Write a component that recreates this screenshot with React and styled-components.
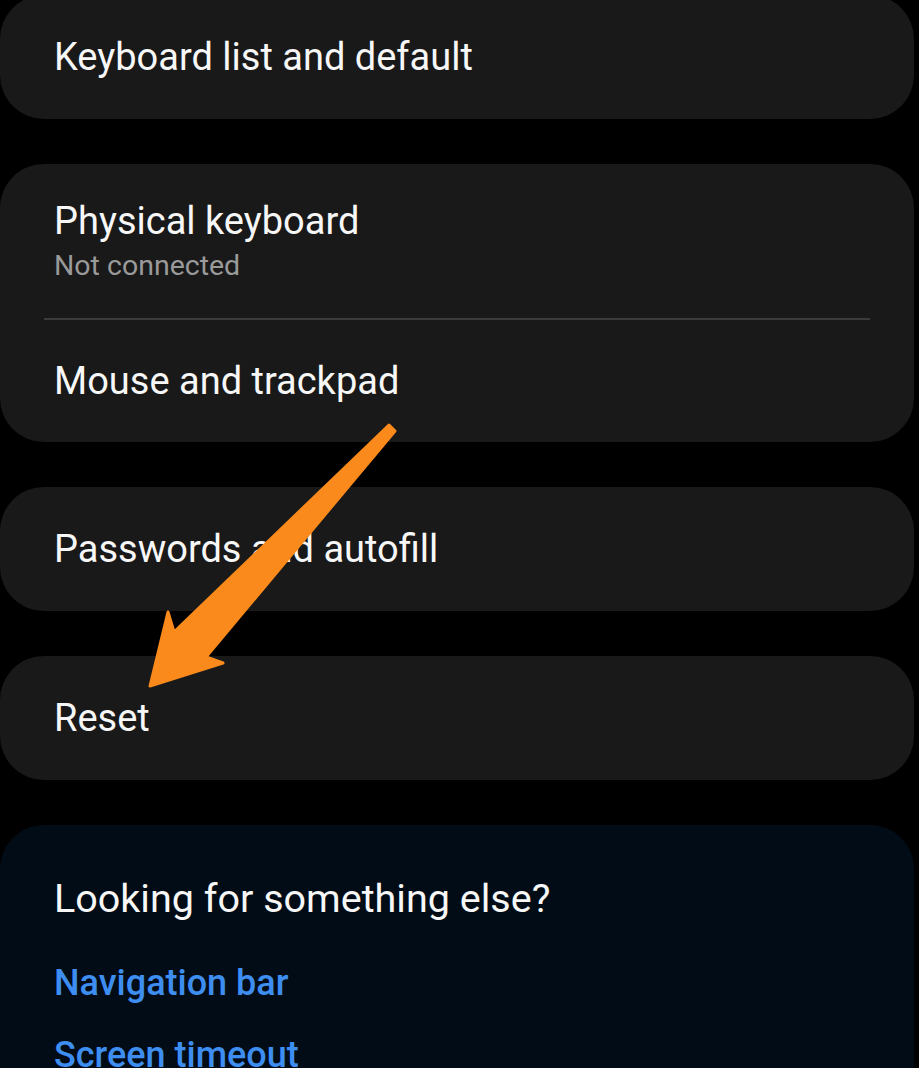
import React from "react";
import styled, { createGlobalStyle } from "styled-components";

const Global = createGlobalStyle`
  html, body {
    margin: 0;
    background: #000;
  }
  body {
    font-family: Roboto, "Noto Sans", "Liberation Sans", sans-serif;
    color: #f7f7f7;
    overflow: hidden;
  }
`

const Page = styled.div`
  position: relative;
  width: 919px;
  height: 1068px;
  overflow: hidden;
  display: flex;
  flex-direction: column;
  gap: 45px;
  padding-right: 5px;
  box-sizing: border-box;
`

const Card = styled.div`
  background: ${(p) => (p.$tint ? "#020c16" : "#191919")};
  border-radius: 44px;
  margin-top: ${(p) => p.$offset || 0}px;
  display: flex;
  flex-direction: column;
  flex-shrink: 0;
`

const Row = styled.div`
  height: ${(p) => p.$height || 124}px;
  padding: 0 54px;
  display: flex;
  flex-direction: column;
  justify-content: center;
  box-sizing: border-box;
`

const Title = styled.div`
  font-size: 38px;
  line-height: 44px;
  color: #f7f7f7;
`

const Subtitle = styled.div`
  font-size: 28.5px;
  line-height: 34px;
  color: #9a9a9a;
  margin-top: 6px;
`

const Divider = styled.div`
  height: 2px;
  background: #3b3b3b;
  margin: 0 44px;
`

const Suggest = styled.div`
  padding: 52px 54px 0;
  display: flex;
  flex-direction: column;
`

const Heading = styled.div`
  font-size: 39.5px;
  line-height: 44px;
  color: #f7f7f7;
  margin-bottom: 42px;
`

const Link = styled.div`
  font-size: 36px;
  line-height: 40px;
  font-weight: 500;
  color: #3d8ef0;
  margin-bottom: 32px;
`

const Arrow = styled.svg`
  position: absolute;
  left: 0;
  top: 0;
  pointer-events: none;
`

export default function App() {
  return (
    <>
      <Global />
      <Page>
        <Card $offset={-5}>
          <Row>
            <Title>Keyboard list and default</Title>
          </Row>
        </Card>
        <Card>
          <Row $height={154}>
            <Title>Physical keyboard</Title>
            <Subtitle>Not connected</Subtitle>
          </Row>
          <Divider />
          <Row $height={122}>
            <Title>Mouse and trackpad</Title>
          </Row>
        </Card>
        <Card>
          <Row>
            <Title>Passwords and autofill</Title>
          </Row>
        </Card>
        <Card>
          <Row>
            <Title>Reset</Title>
          </Row>
        </Card>
        <Card $tint>
          <Suggest>
            <Heading>Looking for something else?</Heading>
            <Link>Navigation bar</Link>
            <Link>Screen timeout</Link>
          </Suggest>
        </Card>
        <Arrow width="919" height="1068" viewBox="0 0 919 1068">
          <path
            d="M389 425 L174 632 L168 612 L150 686 L223 663 L206 657 L395 431 Z"
            fill="#fb8a1c"
            stroke="#fb8a1c"
            strokeWidth="3"
            strokeLinejoin="round"
          />
        </Arrow>
      </Page>
    </>
  );
}
